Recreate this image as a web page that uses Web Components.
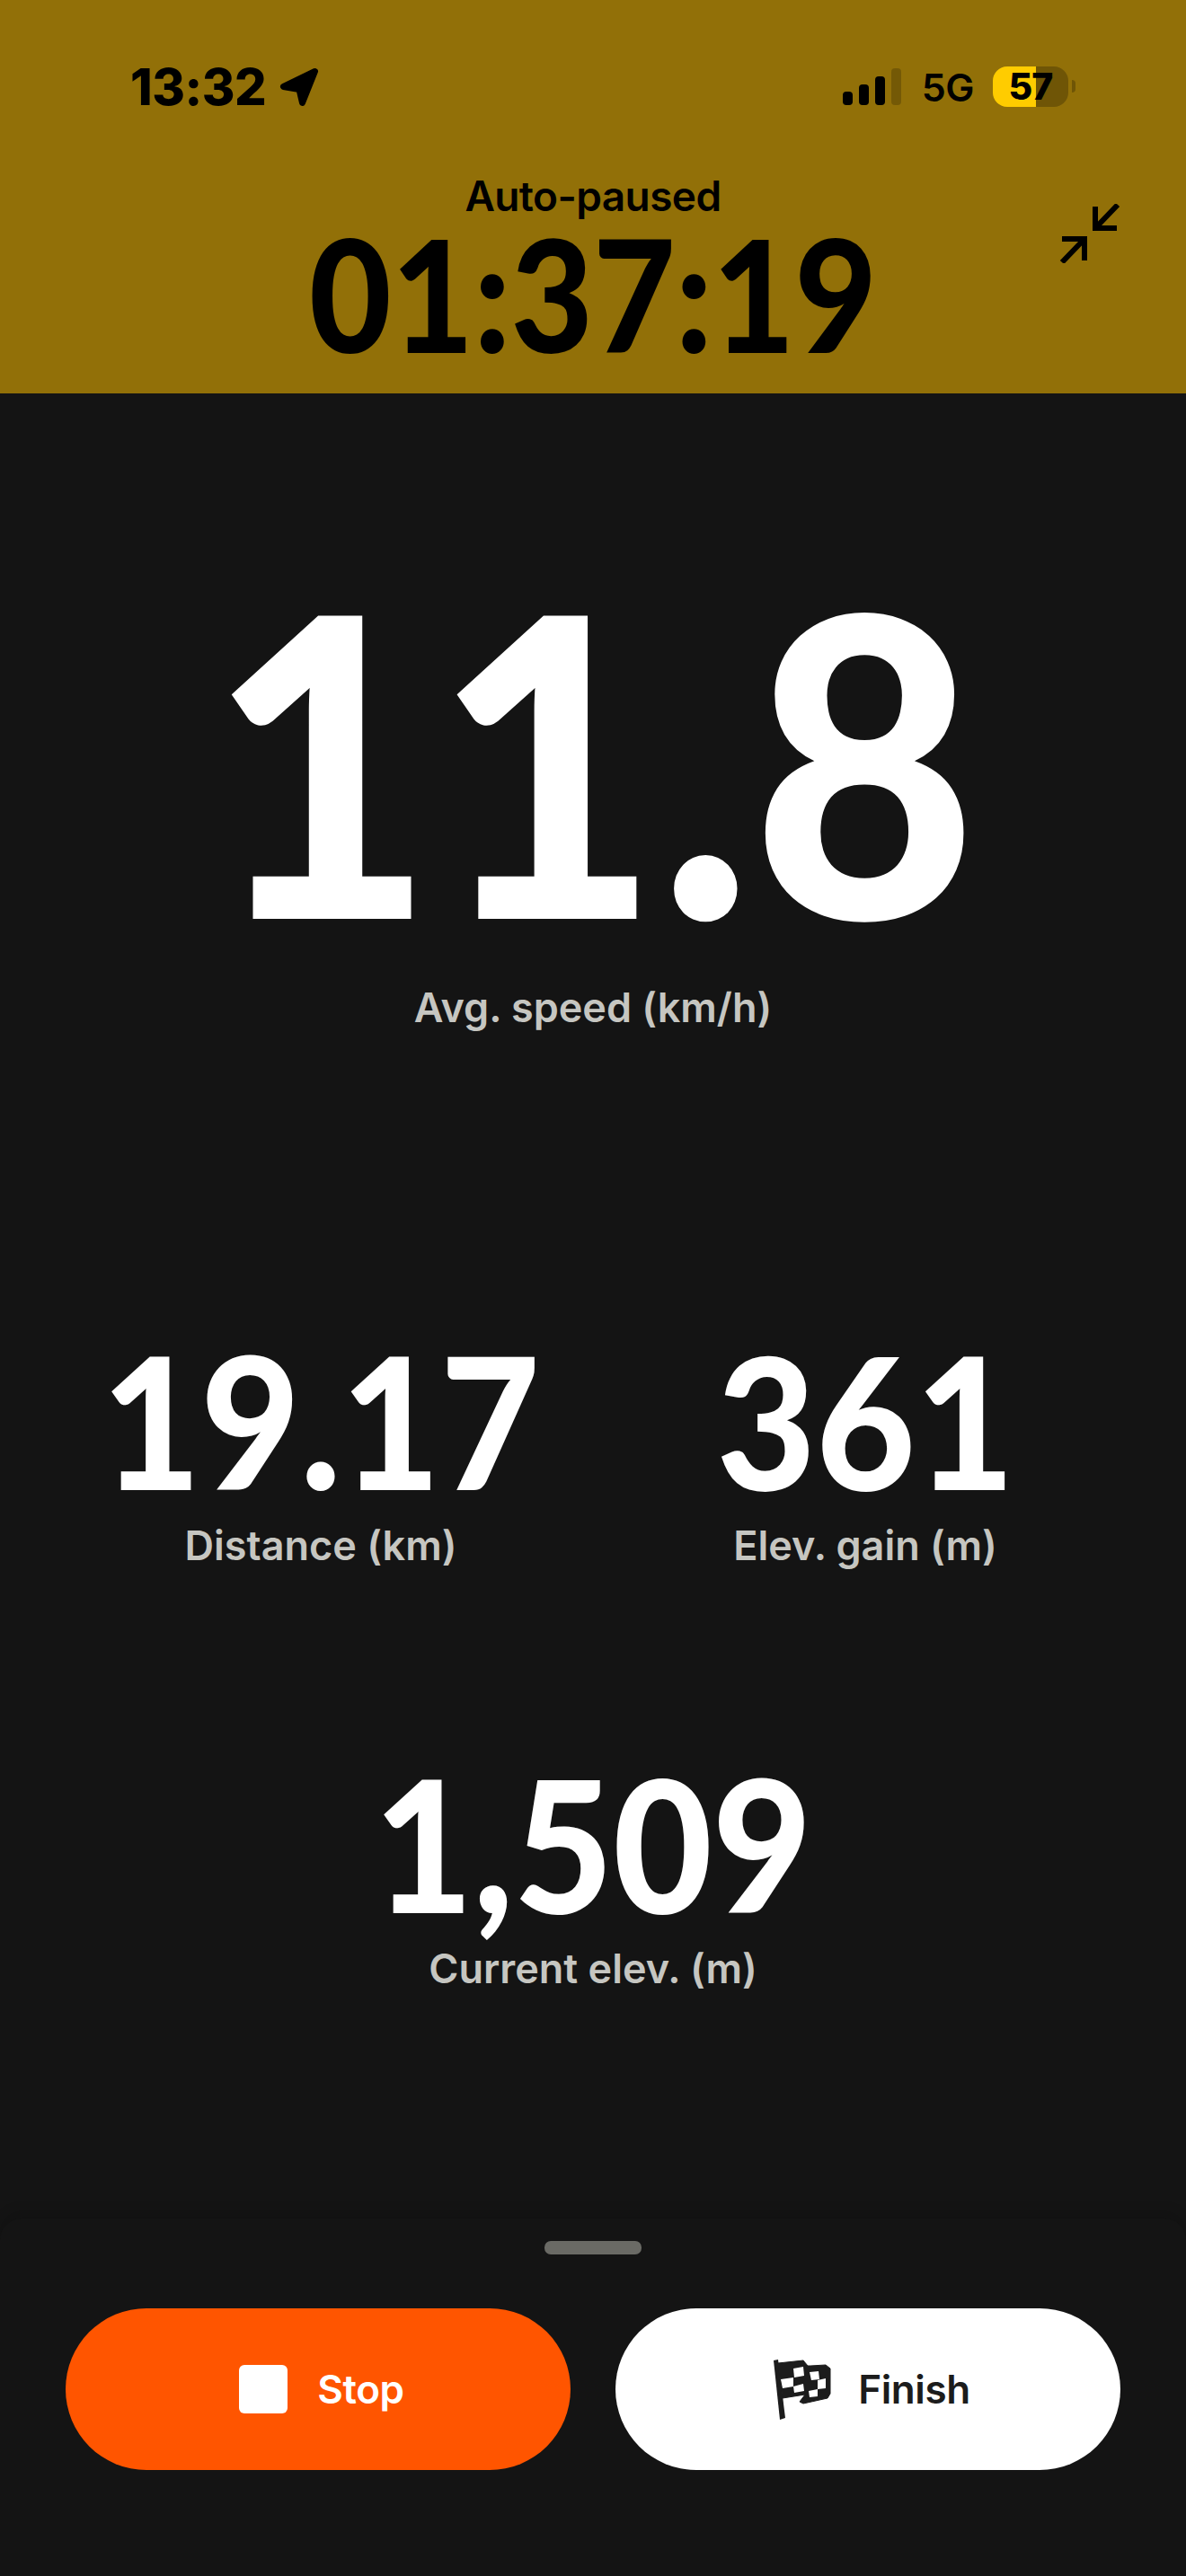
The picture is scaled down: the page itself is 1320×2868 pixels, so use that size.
<!DOCTYPE html>
<html lang="en">
<head>
<meta charset="utf-8">
<title>Recording</title>
<style>
  html, body { margin: 0; background: #141414; }
</style>
</head>
<body>
<record-screen></record-screen>

<script>
class StatusBar extends HTMLElement {
  constructor() {
    super();
    this.attachShadow({ mode: "open" });
    this.shadowRoot.innerHTML = `
      <style>
        :host { display: flex; justify-content: space-between; align-items: flex-start; padding: 74px 123px 0 145px; height: 46px; color: #000; font-family: Inter, sans-serif; }
        .left { display: flex; align-items: center; gap: 15px; }
        .time { font-size: 56px; font-weight: 800; line-height: 46px; letter-spacing: -.5px; }
        .left svg { display: block; }
        .right { display: flex; align-items: flex-start; }
        .bars { display: flex; align-items: flex-end; gap: 7px; height: 41px; margin: 2px 23px 0 0; }
        .bars i { display: block; width: 11px; border-radius: 4px; background: #000; }
        .bars i:last-child { background: rgba(0,0,0,.2); }
        .net { font-size: 43px; font-weight: 600; line-height: 46px; margin-right: 21px; letter-spacing: -.5px; }
        .battery { width: 84px; height: 45px; border-radius: 16px; background: linear-gradient(90deg, #ffcc00 57%, #6f5506 57%); font-size: 41px; font-weight: 800; line-height: 45px; text-align: center; letter-spacing: -1px; }
        .nub { width: 4px; height: 14px; margin: 15px 0 0 4px; border-radius: 0 4px 4px 0; background: #6f5506; }
      </style>
      <div class="left">
        <span class="time">13:32</span>
        <svg width="44" height="44" viewBox="0 0 44 44"><path d="M39.500 4.500 4.500 21.500 22 24.500 25.500 39.500Z" fill="#000" stroke="#000" stroke-width="7" stroke-linejoin="round"/></svg>
      </div>
      <div class="right">
        <div class="bars"><i style="height:15px"></i><i style="height:23px"></i><i style="height:32px"></i><i style="height:41px"></i></div>
        <span class="net">5G</span>
        <div class="battery">57</div>
        <div class="nub"></div>
      </div>
    `;
  }
}

class TimerHeader extends HTMLElement {
  constructor() {
    super();
    this.attachShadow({ mode: "open" });
    this.shadowRoot.innerHTML = `
      <style>
        :host { display: block; height: 438px; box-sizing: border-box; background: #927008; color: #000; }
        .body { display: grid; grid-template-columns: 1fr auto 1fr; margin-top: 69px; }
        .center { grid-column: 2; display: flex; flex-direction: column; align-items: center; }
        .state { font-family: Inter, sans-serif; font-size: 46px; font-weight: 600; line-height: 58px; letter-spacing: -.6px; }
        .clock { font-family: Lato, sans-serif; font-weight: 900; font-size: 173px; line-height: 158px; transform: scaleX(.913); white-space: nowrap; }
        .shrink { grid-column: 3; justify-self: end; margin: 38px 73px 0 0; display: block; }
      </style>
      <status-bar></status-bar>
      <div class="body">
        <div class="center">
          <span class="state"><slot name="state"></slot></span>
          <span class="clock"><slot name="clock"></slot></span>
        </div>
        <svg class="shrink" width="68" height="66" viewBox="0 0 68 66" fill="none" stroke="#000" stroke-width="6">
          <path d="M40 3V27H64M40 27 65 1"/>
          <path d="M3 39H28V63M28 39 3 65"/>
        </svg>
      </div>
    `;
  }
}

class StatBlock extends HTMLElement {
  constructor() {
    super();
    this.attachShadow({ mode: "open" });
    this.shadowRoot.innerHTML = `
      <style>
        :host { display: flex; flex-direction: column; align-items: center; color: #fff; }
        .value { font-family: Lato, sans-serif; font-weight: 900; font-size: var(--size, 204px); line-height: var(--line, 180px); transform: scaleX(var(--squeeze, .935)); white-space: nowrap; }
        .label { font-family: Inter, sans-serif; font-size: 45px; font-weight: 600; line-height: 52px; color: #c6c6c1; margin-top: var(--label-gap, 25px); }
      </style>
      <span class="value"><slot></slot></span>
      <span class="label"><slot name="label"></slot></span>
    `;
  }
}

class ActionButton extends HTMLElement {
  constructor() {
    super();
    this.attachShadow({ mode: "open" });
    this.shadowRoot.innerHTML = `
      <style>
        :host { display: flex; align-items: center; justify-content: center; gap: var(--gap, 32px); width: 562px; height: 180px; box-sizing: border-box; padding-left: var(--pad, 8px); border-radius: 90px; background: var(--bg, #fff); color: var(--fg, #1c1c1c); font-family: Inter, sans-serif; font-size: 44px; font-weight: 600; letter-spacing: -.4px; }
      </style>
      <slot name="icon"></slot>
      <span><slot></slot></span>
    `;
  }
}

class ActionSheet extends HTMLElement {
  constructor() {
    super();
    this.attachShadow({ mode: "open" });
    this.shadowRoot.innerHTML = `
      <style>
        :host { display: block; height: 398px; box-sizing: border-box; padding-top: 25px; background: #141414; border-radius: 24px 24px 0 0; box-shadow: 0 -8px 14px rgba(0,0,0,.12); }
        .handle { width: 108px; height: 15px; margin: 0 auto 60px; border-radius: 7px; background: #6a6a65; }
        .row { display: flex; justify-content: space-between; padding: 0 73px; }
      </style>
      <div class="handle"></div>
      <div class="row"><slot></slot></div>
    `;
  }
}

class RecordScreen extends HTMLElement {
  constructor() {
    super();
    this.attachShadow({ mode: "open" });
    this.shadowRoot.innerHTML = `
      <style>
        :host { display: flex; flex-direction: column; height: 2868px; overflow: hidden; background: #141414; }
        main { flex: 1; display: flex; flex-direction: column; padding: 0 54px; }
        .hero { --size: 465px; --line: 470px; --squeeze: .93; --label-gap: 18px; margin-top: 170px; }
        .pair { display: grid; grid-template-columns: 1fr 1fr; margin-top: 342px; }
        .solo { margin-top: 214px; }
      </style>
      <timer-header>
        <span slot="state">Auto-paused</span>
        <span slot="clock">01:37:19</span>
      </timer-header>
      <main>
        <stat-block class="hero">11.8<span slot="label">Avg. speed (km/h)</span></stat-block>
        <div class="pair">
          <stat-block>19.17<span slot="label">Distance (km)</span></stat-block>
          <stat-block>361<span slot="label">Elev. gain (m)</span></stat-block>
        </div>
        <stat-block class="solo">1,509<span slot="label">Current elev. (m)</span></stat-block>
      </main>
      <action-sheet>
        <action-button style="--bg:#ff5500;--fg:#fff;--gap:33px;--pad:8px">
          <svg slot="icon" width="54" height="54" viewBox="0 0 54 54"><rect width="54" height="54" rx="6" fill="#fff"/></svg>
          Stop
        </action-button>
        <action-button style="--gap:30px;--pad:9px">
          <svg slot="icon" width="64" height="67" viewBox="0 0 64 67">
            <path d="M0 1 5 0 13 65 7 67Z" fill="#1c1c1c"/>
            <path d="M5 4 33 1 38 7 41 7 58 6 63 10 63 38 60 43 33 49 29 47 35 39 10 43Z" fill="#1c1c1c" stroke="#1c1c1c" stroke-linejoin="round"/>
            <g fill="#fff">
              <path d="M8 22 22 20 22 30 10 32Z"/>
              <path d="M22 10 33 8 34 18 23 20Z"/>
              <path d="M40 14 50 13 51 22 42 23Z"/>
              <path d="M22 30 33 27 34 35 23 37Z"/>
              <path d="M49 23 58 21 58 32 49 33Z"/>
              <path d="M39 35 49 33 49 41 40 42Z"/>
            </g>
          </svg>
          Finish
        </action-button>
      </action-sheet>
    `;
  }
}

customElements.define("status-bar", StatusBar);
customElements.define("timer-header", TimerHeader);
customElements.define("stat-block", StatBlock);
customElements.define("action-button", ActionButton);
customElements.define("action-sheet", ActionSheet);
customElements.define("record-screen", RecordScreen);
</script>
</body>
</html>
